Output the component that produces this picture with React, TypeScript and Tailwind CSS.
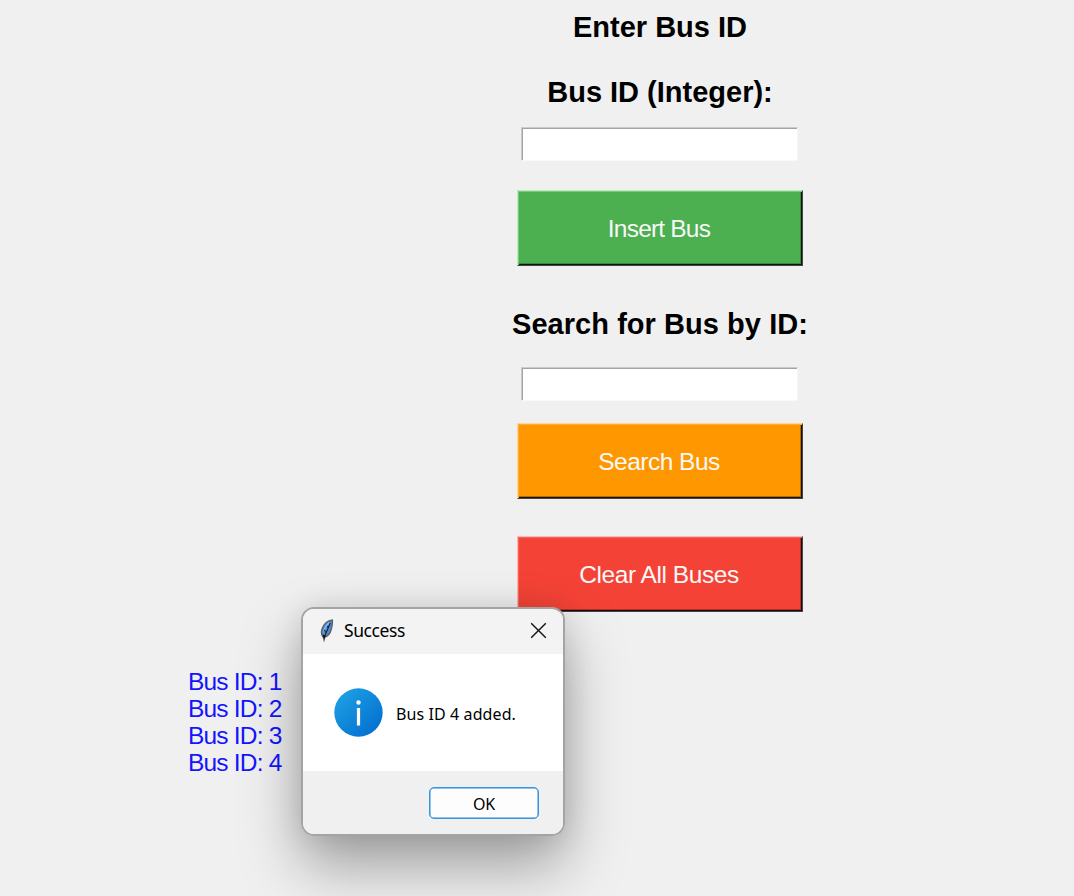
import type { ReactNode } from "react";

const buses = [1, 2, 3, 4];

function Heading({ children, className }: { children: ReactNode; className: string }) {
  return (
    <h2 className={`text-[29px] leading-[34px] font-bold whitespace-nowrap text-black ${className}`}>{children}</h2>
  );
}

function Entry({ className }: { className: string }) {
  return (
    <input
      aria-label="Bus ID"
      className={`mr-px block h-[34px] w-[277px] rounded-none border border-t-[#cbcbcb] border-r-[#f8f8f8] border-b-[#f8f8f8] border-l-[#cbcbcb] bg-white px-1 text-2xl shadow-[inset_1px_1px_0_#a3a3a3] outline-none ${className}`}
    />
  );
}

function ActionButton({ children, className }: { children: ReactNode; className: string }) {
  return (
    <button
      className={`flex h-[76px] w-[286px] items-center justify-center border border-r-[#444] border-b-[#444] pt-[2px] text-[24.5px] whitespace-nowrap text-[#f8f8f8] ${className}`}
    >
      {children}
    </button>
  );
}

function Feather() {
  return (
    <svg width="14" height="24" viewBox="0 0 14 24" className="mt-[2px] shrink-0">
      <path d="M12.300.900C8.500 1.500 4.200 4.300 2.200 9.500 1 13 1.400 16.200 3 18l1.200.300C8 17.500 10.400 14 11.400 10c.8-3.200 1.500-5.800.9-9.100Z" fill="#4a8ad2" stroke="#606060" strokeWidth="1.300" />
      <path d="M9.500 3.500C6.300 6 4.300 9.500 3.900 13.500" stroke="#7fb4ee" strokeWidth="1.600" fill="none" />
      <path d="M10.300 4C8.600 8 6.700 12 4.500 18M4.300 11l1.600 2.500M7.500 7l.8 2.500" stroke="#14202f" strokeWidth="1.100" fill="none" />
      <path d="M2.700 15.500 4 23.500 5.500 16.500Z" fill="#151515" />
    </svg>
  );
}

function InfoIcon() {
  return (
    <svg width="49" height="49" viewBox="0 0 49 49" className="shrink-0">
      <defs>
        <linearGradient id="info" x1="0.100" y1="0.100" x2="0.850" y2="0.900">
          <stop offset="0" stopColor="#1e9fe4" />
          <stop offset="1" stopColor="#0371d0" />
        </linearGradient>
      </defs>
      <circle cx="24.500" cy="24.500" r="24.200" fill="url(#info)" />
      <circle cx="24.500" cy="14.500" r="2.200" fill="#fff" />
      <rect x="22.900" y="20" width="3.200" height="17.500" fill="#fff" />
    </svg>
  );
}

function SuccessDialog() {
  return (
    <div
      role="dialog"
      aria-label="Success"
      className="absolute top-[607px] left-[301px] flex h-[229px] w-[264px] flex-col rounded-[13px] border-2 border-[#a4a4a4] font-['Noto_Sans',sans-serif] text-black shadow-[0_30px_60px_rgba(0,0,0,0.34),0_0_30px_rgba(0,0,0,0.1)]"
    >
      <div className="flex h-[45px] shrink-0 items-center rounded-t-[11px] bg-[#f3f3f3] pr-[16px] pb-[3px] pl-[17px]">
        <Feather />
        <span className="ml-[10px] text-[17.5px] leading-[24px] tracking-[-0.4px]">Success</span>
        <button aria-label="Close" className="ml-auto">
          <svg width="17" height="17" viewBox="0 0 17 17">
            <path d="M1.200 1.200 15.800 15.800M15.800 1.200 1.200 15.800" stroke="#111" strokeWidth="1.400" />
          </svg>
        </button>
      </div>
      <div className="flex h-[117px] shrink-0 items-center bg-white pl-[31px]">
        <InfoIcon />
        <span className="mt-[3px] ml-[13px] text-[16px] leading-[22px] tracking-[0.100px] whitespace-nowrap">Bus ID 4 added.</span>
      </div>
      <div className="flex flex-1 items-start justify-end rounded-b-[11px] bg-[#f0f0f0] pt-[16px] pr-[24px]">
        <button className="flex h-[32px] w-[110px] items-center justify-center rounded-[5px] border border-[#3a95dc] bg-[#fdfdfd] pt-px text-[16px] tracking-[-0.200px] shadow-[inset_0_0_0_0.500px_#2588d8]">
          OK
        </button>
      </div>
    </div>
  );
}

export default function App() {
  return (
    <main className="relative flex h-[896px] w-[1074px] flex-col overflow-hidden bg-[#f0f0f0] font-['Liberation_Sans',Arial,sans-serif]">
      <section className="ml-[246px] flex w-[828px] flex-col items-center">
        <Heading className="mt-[10px]">Enter Bus ID</Heading>
        <Heading className="mt-[31px]">Bus ID (Integer):</Heading>
        <Entry className="mt-[18px]" />
        <ActionButton className="mt-[29px] border-t-[#bdebbf] border-l-[#bdebbf] bg-[#4caf50] pr-[2px] tracking-[-0.800px] shadow-[inset_1px_1px_0_#74cc78,inset_-1px_-1px_0_#0c180c,inset_-2px_-2px_0_#3b893e]">Insert Bus</ActionButton>
        <Heading className="mt-[41px] tracking-[0.050px]">Search for Bus by ID:</Heading>
        <Entry className="mt-[26px]" />
        <ActionButton className="mt-[22px] border-t-[#fbd698] border-l-[#fbd698] bg-[#ff9800] pr-[2px] tracking-[-0.500px] shadow-[inset_1px_1px_0_#ffad38,inset_-1px_-1px_0_#1a1000,inset_-2px_-2px_0_#b56c00]">Search Bus</ActionButton>
        <ActionButton className="mt-[37px] border-t-[#f6b9b4] border-l-[#f6b9b4] bg-[#f44336] pr-[2px] tracking-[-0.450px] shadow-[inset_1px_1px_0_#f8645a,inset_-1px_-1px_0_#1c0806,inset_-2px_-2px_0_#b43329]">Clear All Buses</ActionButton>
      </section>
      <ul className="mt-[56px] ml-[188px] text-[24.500px] leading-[27px] tracking-[-0.800px] text-[#1414ff]">
        {buses.map((id) => (
          <li key={id}>Bus ID: {id}</li>
        ))}
      </ul>
      <SuccessDialog />
    </main>
  );
}
